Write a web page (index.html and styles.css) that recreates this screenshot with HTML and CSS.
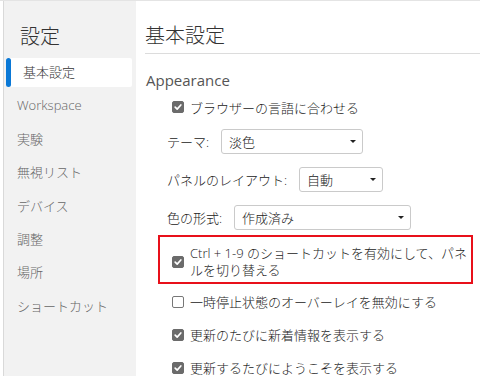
FILE: index.html
```html
<!DOCTYPE html>
<html lang="ja">
  <head>
    <meta charset="UTF-8" />
    <meta name="viewport" content="width=device-width, initial-scale=1.0" />
    <title>設定</title>
    <link rel="stylesheet" href="styles.css">
  </head>
  <body>
    <div class="app">
      <aside class="sidebar">
        <h1 class="side-title">設定</h1>
        <ul class="nav">
          <li class="nav-item active">基本設定</li>
          <li class="nav-item">Workspace</li>
          <li class="nav-item">実験</li>
          <li class="nav-item">無視リスト</li>
          <li class="nav-item">デバイス</li>
          <li class="nav-item">調整</li>
          <li class="nav-item">場所</li>
          <li class="nav-item">ショートカット</li>
        </ul>
      </aside>

      <main class="content">
        <h2 class="page-title">基本設定</h2>
        <h3 class="section-title">Appearance</h3>

        <div class="options">
          <label class="check-row first">
            <span class="box checked"><svg viewBox="0 0 12 12"><path d="M2.6 6.2 L5 8.6 L9.4 3.6" /></svg></span>
            <span>ブラウザーの言語に合わせる</span>
          </label>

          <div class="select-row theme-row">
            <span class="field-label">テーマ:</span>
            <span class="select">
              <select class="select-input w-theme"><option>淡色</option></select>
            </span>
          </div>

          <div class="select-row">
            <span class="field-label">パネルのレイアウト:</span>
            <span class="select">
              <select class="select-input w-panel"><option>自動</option></select>
            </span>
          </div>

          <div class="select-row">
            <span class="field-label">色の形式:</span>
            <span class="select">
              <select class="select-input w-color"><option>作成済み</option></select>
            </span>
          </div>

          <!-- highlighted option -->
          <label class="check-row highlight">
            <span class="box checked"><svg viewBox="0 0 12 12"><path d="M2.6 6.2 L5 8.6 L9.4 3.6" /></svg></span>
            <span>Ctrl + 1-9 のショートカットを有効にして、パネルを切り替える</span>
          </label>

          <label class="check-row">
            <span class="box"></span>
            <span>一時停止状態のオーバーレイを無効にする</span>
          </label>

          <label class="check-row">
            <span class="box checked"><svg viewBox="0 0 12 12"><path d="M2.6 6.2 L5 8.6 L9.4 3.6" /></svg></span>
            <span>更新のたびに新着情報を表示する</span>
          </label>

          <label class="check-row">
            <span class="box checked"><svg viewBox="0 0 12 12"><path d="M2.6 6.2 L5 8.6 L9.4 3.6" /></svg></span>
            <span>更新するたびにようこそを表示する</span>
          </label>
        </div>
      </main>
    </div>
  </body>
</html>
```

FILE: styles.css
```css
body {
  margin: 0;
  overflow: hidden;
  background: #fff;
  font-family: "Open Sans", "Noto Sans CJK JP", sans-serif;
  font-weight: 300;
  color: #333;
}

.app {
  display: flex;
  height: 375px;
  border-top: 1px solid #e4e4e4;
  padding-left: 3px;
}

/* Sidebar */
.sidebar {
  width: 132px;
  flex: none;
  background: #f2f2f2;
  border-left: 1px solid #d9d9d9;
  padding-top: 22px;
}

.side-title {
  margin: 0 0 7px 16px;
  font-size: 20px;
  line-height: 28px;
  font-weight: 300;
  color: #333;
}

.nav {
  list-style: none;
  margin: 0;
  padding: 0 4px 0 2px;
  display: flex;
  flex-direction: column;
  gap: 4.4px;
}

.nav-item {
  position: relative;
  height: 29px;
  line-height: 28px;
  padding-left: 11px;
  font-size: 13px;
  color: #666;
}

.nav-item.active {
  background: #fff;
  color: #333;
  padding-left: 17px;
  border-radius: 2px;
}

.nav-item.active::before {
  content: "";
  position: absolute;
  left: 0;
  top: 0;
  width: 5px;
  height: 29px;
  border-radius: 3px;
  background: #0a78d6;
}

/* Main */
.content {
  flex: 1;
  padding-top: 21px;
  padding-left: 9px;
}

.page-title {
  margin: 0;
  padding-bottom: 3px;
  font-size: 20px;
  line-height: 28px;
  font-weight: 300;
  color: #333;
  border-bottom: 1px solid #dcdcdc;
}

.section-title {
  margin: 16px 0 0 1px;
  font-size: 15px;
  line-height: 20px;
  font-weight: normal;
  color: #555;
}

.options {
  display: flex;
  flex-direction: column;
  align-items: flex-start;
  padding-left: 22px;
}

.check-row {
  display: flex;
  align-items: center;
  gap: 6px;
  height: 33px;
  padding-left: 5px;
  font-size: 13px;
  color: #222;
}

.check-row.first {
  height: 22px;
  margin-top: 6px;
}

.box {
  flex: none;
  box-sizing: border-box;
  width: 12px;
  height: 12px;
  border: 1px solid #777;
  border-radius: 2px;
  background: #fff;
}

.box.checked {
  border-color: #6b6b6b;
  background: #6b6b6b;
}

.box svg {
  display: block;
  width: 10px;
  height: 10px;
  fill: none;
  stroke: #fff;
  stroke-width: 2;
  stroke-linecap: round;
  stroke-linejoin: round;
}

.select-row {
  display: flex;
  align-items: center;
  gap: 12px;
  margin-top: 13px;
  font-size: 13px;
  color: #222;
}

.select-row.theme-row {
  margin-top: 11px;
}

.select {
  position: relative;
  display: inline-block;
}

.select::after {
  content: "";
  position: absolute;
  right: 7px;
  top: 11px;
  border-left: 3px solid transparent;
  border-right: 3px solid transparent;
  border-top: 3px solid #222;
}

.select-input {
  appearance: none;
  display: block;
  height: 25px;
  margin: 0;
  padding: 0 20px 0 7px;
  border: 1px solid #cacaca;
  border-radius: 3px;
  background: #fff;
  font: inherit;
  font-size: 13px;
  color: #222;
}

.w-theme { width: 142px; }
.w-panel { width: 84px; }
.w-color { width: 177px; }

.check-row.highlight {
  align-self: stretch;
  height: auto;
  margin: 5px 7px 1px -9px;
  padding: 8px 0 3px 12px;
  border: 2px solid #e8101a;
  line-height: 17px;
}
```
